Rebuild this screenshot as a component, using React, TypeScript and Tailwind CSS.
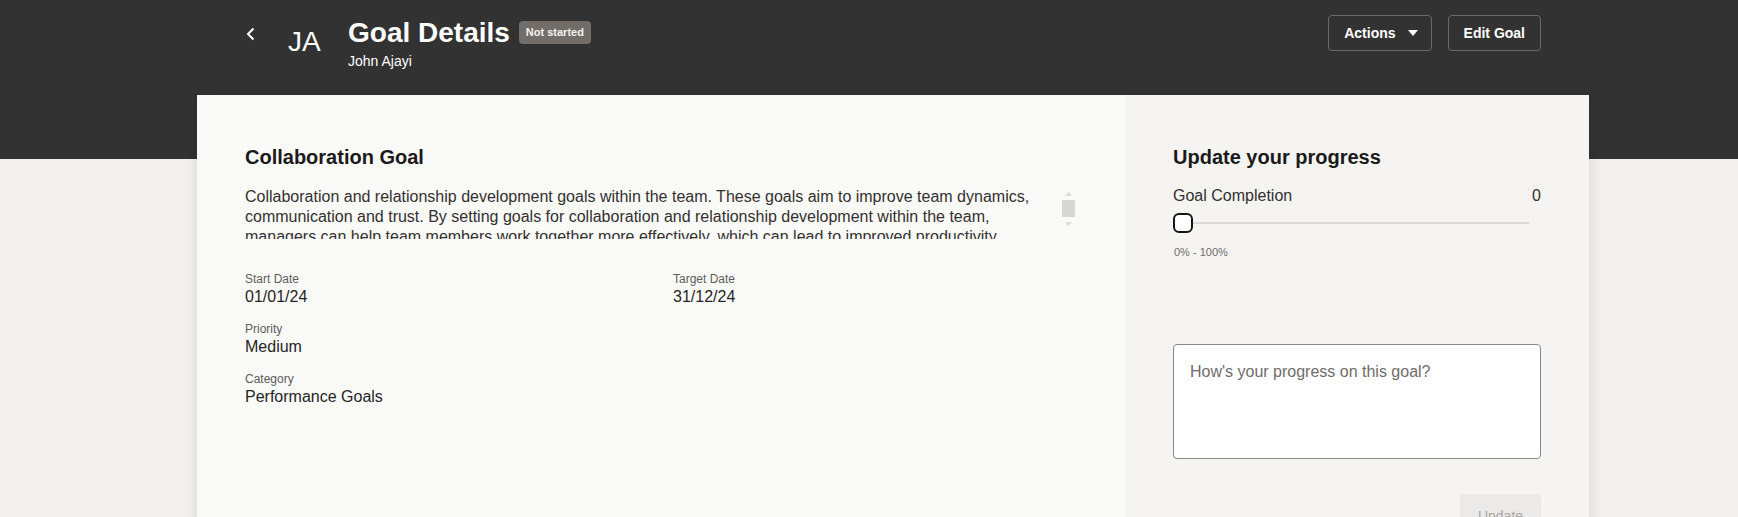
import { useState } from 'react';

const description =
  'Collaboration and relationship development goals within the team. These goals aim to improve team dynamics, communication and trust. By setting goals for collaboration and relationship development within the team, managers can help team members work together more effectively, which can lead to improved productivity, better decision-making and a more positive work environment.';

function Field({ label, value }: { label: string; value: string }) {
  return (
    <div>
      <p className="text-[12px] leading-4 text-[#5f5c59]">{label}</p>
      <p className="text-[16px] leading-5 text-[#262422]">{value}</p>
    </div>
  );
}

export default function App() {
  const [progress, setProgress] = useState(0);
  const [note, setNote] = useState('');

  return (
    <div className="h-[517px] overflow-hidden bg-[#f1f0ee] font-['Liberation_Sans',Arial,sans-serif]">
      {/* Dark header */}
      <div className="bg-[#323232] h-[159px]">
        <div className="w-[1392px] ml-[197px] px-12 pt-[15px] flex items-start justify-between">
          <div className="flex items-start">
            <button className="mt-[12px] w-[10px] h-[14px] flex items-center justify-center text-white">
              <svg width="9" height="14" viewBox="0 0 9 14" fill="none">
                <path d="M7.5 1.5 2 7l5.5 5.5" stroke="currentColor" strokeWidth="2" />
              </svg>
            </button>
            <div className="ml-[33px] mt-[10px] w-[40px] text-[28px] leading-[34px] font-light text-white">JA</div>
            <div className="ml-[20px]">
              <div className="flex items-start gap-[9px]">
                <h1 className="text-[28px] leading-[36px] font-bold text-white">Goal Details</h1>
                <span className="mt-[6px] h-[23px] px-[7px] flex items-center rounded-[4px] bg-[#726d68] text-[11px] font-bold text-[#f4f2ef]">
                  Not started
                </span>
              </div>
              <p className="text-[14px] leading-5 text-white">John Ajayi</p>
            </div>
          </div>
          <div className="flex items-center gap-4">
            <button className="h-9 pl-[15px] pr-[13px] flex items-center gap-[12px] rounded-[4px] border border-[#6a6a6a] text-[14px] font-bold text-white">
              Actions
              <svg width="10" height="6" viewBox="0 0 10 6">
                <path d="M0 0h10L5 6z" fill="currentColor" />
              </svg>
            </button>
            <button className="h-9 px-[15px] flex items-center rounded-[4px] border border-[#6a6a6a] text-[14px] font-bold text-white">
              Edit Goal
            </button>
          </div>
        </div>
      </div>

      {/* Card */}
      <div className="w-[1392px] ml-[197px] -mt-[64px] flex shadow-[0_2px_12px_rgba(0,0,0,0.12)] min-h-[460px]">
        <div className="w-[928px] bg-[#fafaf9] pl-12 pr-[50px] pt-12">
          <h2 className="text-[20px] leading-7 font-bold text-[#1b1a19]">Collaboration Goal</h2>
          <div className="mt-[16px] flex">
            <div className="flex-1 h-[52px] overflow-hidden pr-[18px]">
              <p className="text-[16px] leading-5 text-[#33302e]">{description}</p>
            </div>
            {/* scrollbar */}
            <div className="w-[13px] h-[52px] flex flex-col items-center pt-[5px]">
              <svg width="7" height="4" viewBox="0 0 7 4">
                <path d="M0 4 3.5 0 7 4z" fill="#dcdad7" />
              </svg>
              <div className="mt-[4px] w-[13px] h-[17px] bg-[#d9d7d4]" />
              <svg className="mt-[5px]" width="7" height="4" viewBox="0 0 7 4">
                <path d="M0 0h7L3.5 4z" fill="#dcdad7" />
              </svg>
            </div>
          </div>
          <div className="mt-[32px] grid grid-cols-[428px_1fr] gap-y-[14px]">
            <Field label="Start Date" value="01/01/24" />
            <Field label="Target Date" value="31/12/24" />
            <Field label="Priority" value="Medium" />
            <div />
            <Field label="Category" value="Performance Goals" />
          </div>
        </div>

        <div className="flex-1 bg-[#f5f4f2] px-12 pt-12">
          <h2 className="text-[20px] leading-7 font-bold text-[#1b1a19]">Update your progress</h2>
          <div className="mt-[15px] flex justify-between text-[16px] leading-5 text-[#33302e]">
            <span>Goal Completion</span>
            <span>{progress}</span>
          </div>
          <div className="relative mt-[7px] h-5 mr-3">
            <div className="absolute left-[2px] right-0 top-[9px] h-[2px] bg-[#dcdad7]" />
            <div
              className="absolute top-0 w-5 h-5 rounded-[6px] border-2 border-[#161513] bg-white"
              style={{ left: `${progress * 3.34}px` }}
            />
            <input
              type="range"
              min={0}
              max={100}
              value={progress}
              onChange={(e) => setProgress(Number(e.target.value))}
              className="absolute inset-0 w-full opacity-0 cursor-pointer"
            />
          </div>
          <p className="mt-[11px] ml-[1px] text-[11px] leading-4 text-[#6f6c69]">0% - 100%</p>

          <textarea
            value={note}
            onChange={(e) => setNote(e.target.value)}
            placeholder="How's your progress on this goal?"
            className="mt-[84px] block w-full h-[115px] resize-none rounded-[4px] border border-[#8b8986] bg-white px-4 pt-[17px] text-[16px] leading-5 text-[#33302e] placeholder:text-[#6f6c69] outline-none"
          />
          <div className="mt-[35px] flex justify-end">
            <button className="h-11 w-[81px] rounded-[4px] bg-[#ebeae8] text-[14px] text-[#a9a6a3]">Update</button>
          </div>
        </div>
      </div>
    </div>
  );
}
